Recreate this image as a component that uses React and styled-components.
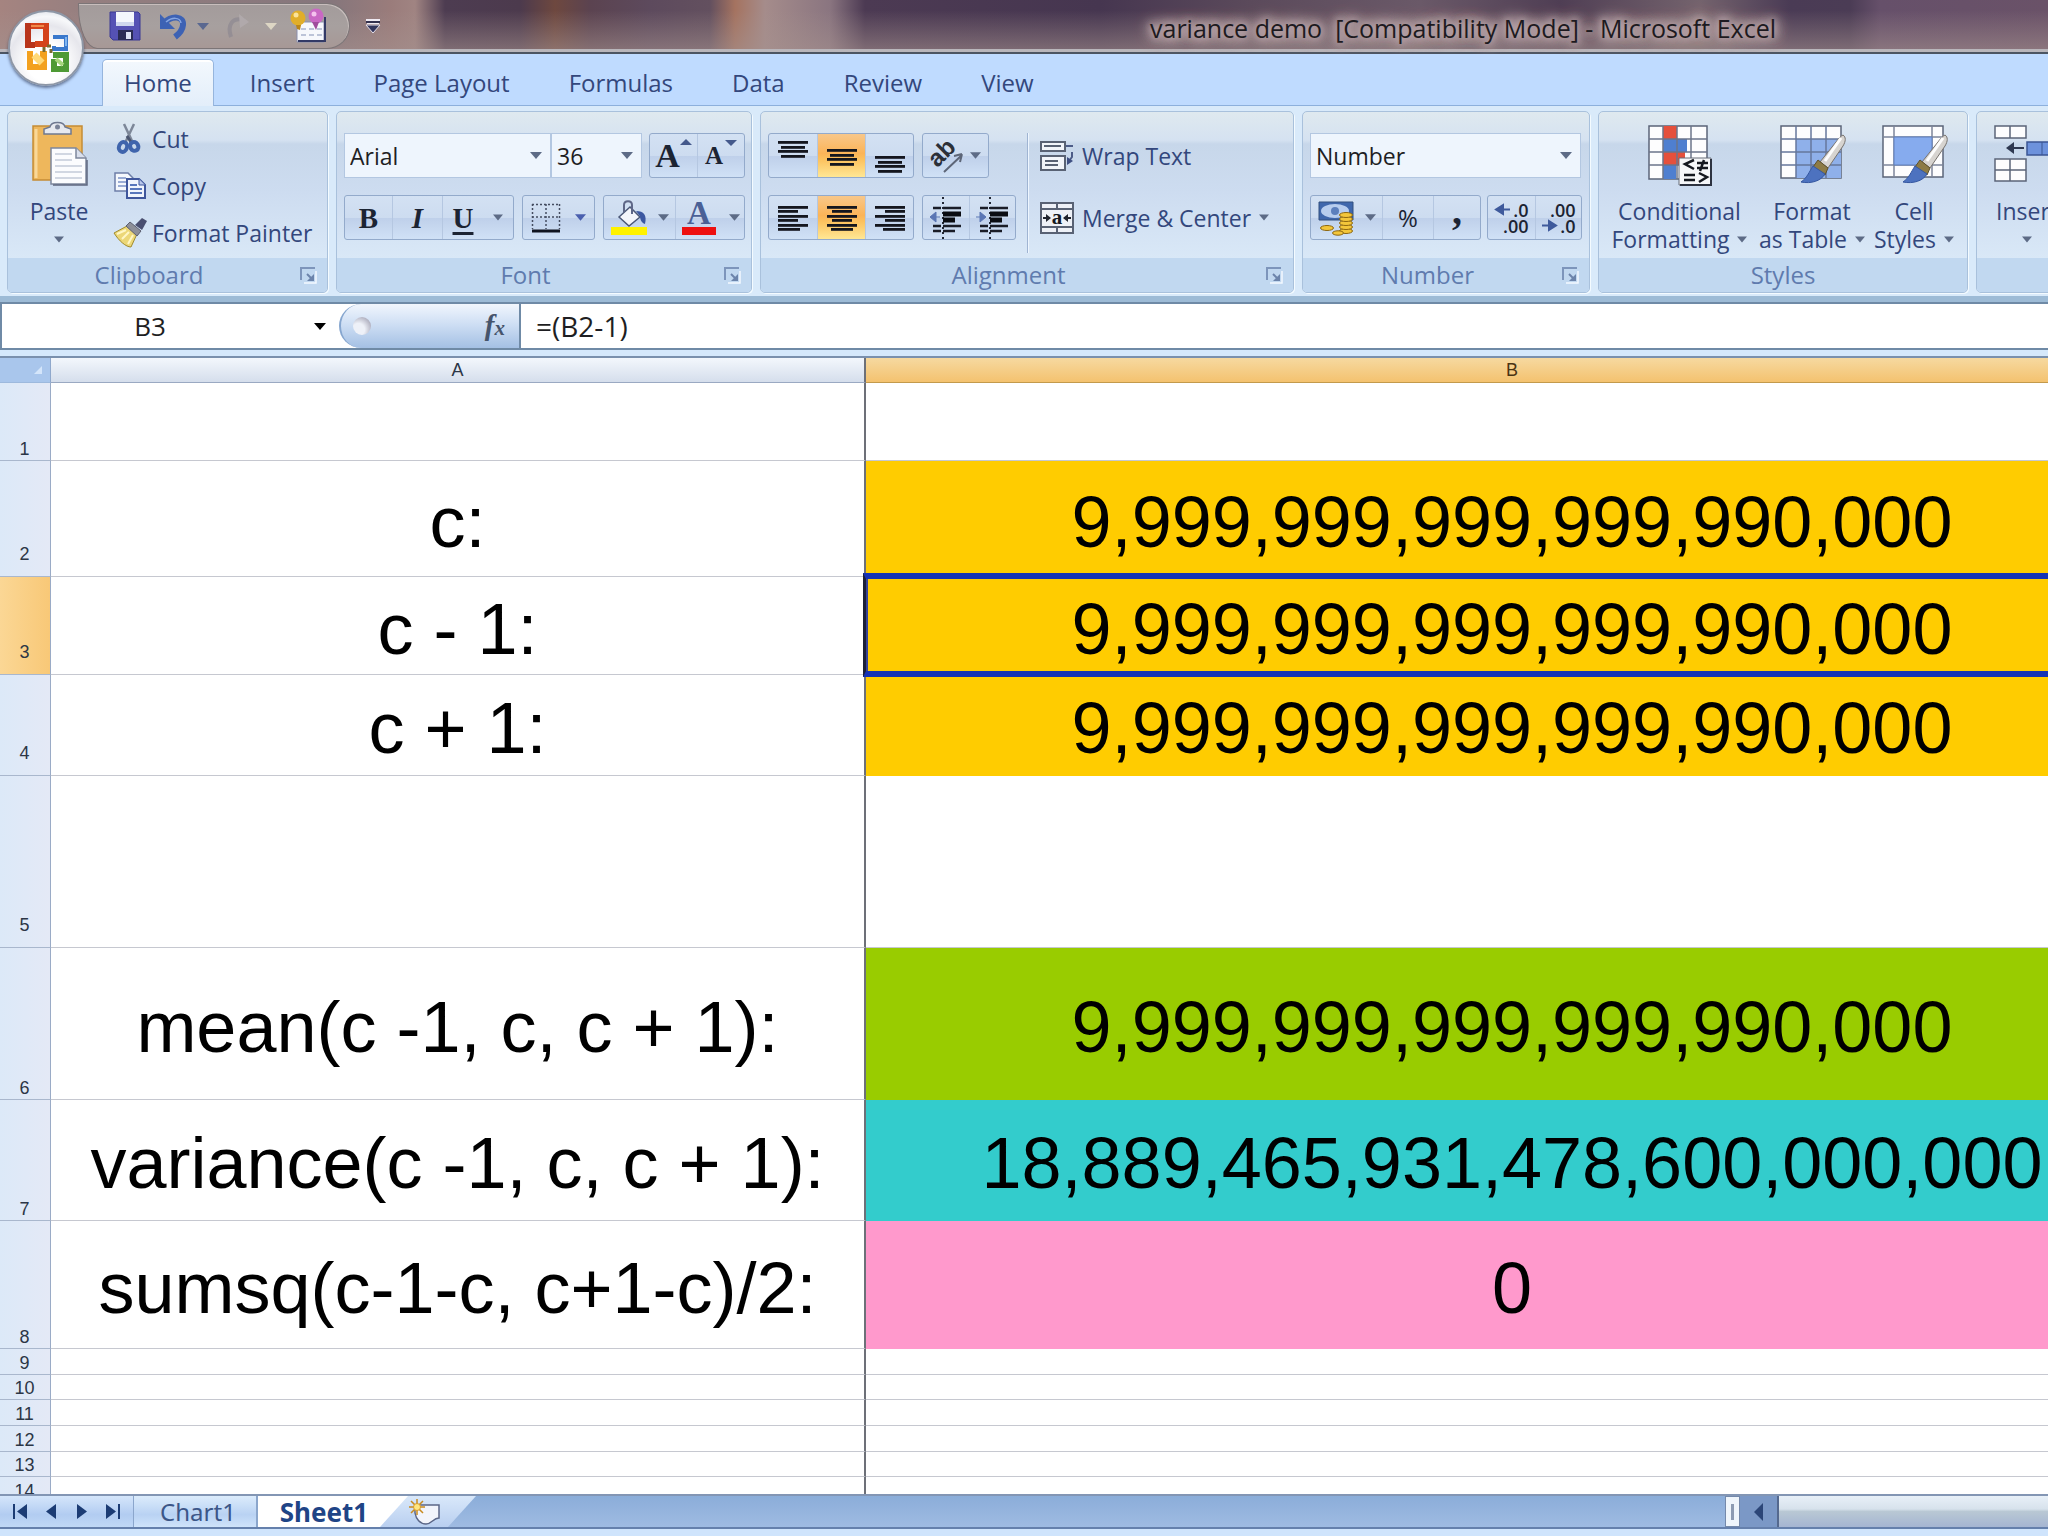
import React from "react";
import styled, { createGlobalStyle, css } from "styled-components";

const ui = `"Open Sans", "Noto Sans", sans-serif`;
const sheetFont = `"Liberation Sans", Arial, sans-serif`;
const ink = "#33477c";

const Global = createGlobalStyle`
  * { box-sizing: border-box; }
  html, body, #root { height: 100%; }
  body { margin: 0; overflow: hidden; background: #cfe4fb; font-family: ${ui}; }
  button, input, select { font: inherit; color: inherit; margin: 0; }
  button { padding: 0; border: 0; background: none; }
  svg { display: block; flex: none; overflow: visible; }
`;

/* ---------- window frame ---------- */

const Window = styled.div`
  position: relative;
  display: flex;
  flex-direction: column;
  height: 100vh;
  overflow: hidden;
`;

const TitleBar = styled.header`
  display: flex;
  align-items: center;
  flex: none;
  height: 54px;
  border-bottom: 2px solid #4c5562;
  box-shadow: inset 0 -3px 0 #b9b6bb;
  background:
    linear-gradient(180deg, rgba(170, 150, 145, 0) 20%, rgba(165, 145, 142, 0.6) 100%),
    linear-gradient(90deg, #a58480 0, #957f80 90px, #85767c 330px, #9a7c7b 390px, #a08482 415px,
      #4d3c51 445px, #4c3a4d 520px, #6e483f 555px, #5b4350 590px, #5d4a5d 650px, #63505f 710px,
      #a57360 735px, #a58c8b 765px, #8a7580 830px, #4c3a53 865px, #463650 1100px, #5b4a5b 1250px,
      #6a5968 1420px, #4f3e54 1560px, #74636d 1700px, #4a3b55 1790px, #4b3c55 1850px, #66506a 1880px, #6a5268 100%);
`;

const QuickAccess = styled.div`
  display: flex;
  align-items: center;
  flex: none;
  height: 46px;
  margin-left: 78px;
  padding: 0 8px 0 22px;
  border: 1px solid #7c7577;
  border-radius: 0 24px 24px 20px / 0 24px 24px 44px;
  background: linear-gradient(180deg, #a39b9b, #a7a09f 50%, #a79896);
  box-shadow: inset -1px 1px 0 #c7bdbc;
`;

const QuickButton = styled.button`
  display: flex;
  align-items: center;
  justify-content: center;
  flex: none;
  width: ${(p) => p.$w}px;
  height: 40px;
`;

const Title = styled.h1`
  flex: 1;
  margin: 0;
  padding: 4px 16px 0 754px;
  font-size: 25px;
  line-height: 32px;
  font-weight: 400;
  white-space: pre;
  color: #1d1a20;
  text-shadow: 0 0 6px #b9a5a9, 0 0 8px #b9a5a9, 0 0 12px #b9a5a9, 0 0 14px #b9a5a9,
    0 0 16px #b9a5a9, 0 0 18px #b9a5a9, 0 0 20px #b9a5a9;
`;

const OfficeButton = styled.button`
  position: absolute;
  left: 8px;
  top: 10px;
  z-index: 2;
  display: flex;
  align-items: center;
  justify-content: center;
  width: 76px;
  height: 76px;
  border-radius: 50%;
  border: 2px solid #8e97a6;
  background: radial-gradient(circle at 50% 70%, #ffffff 0 30%, #e6e6ec 60%, #f7f8fa 74%, #c2c9d4 100%);
  box-shadow: 0 2px 3px rgba(40, 50, 80, 0.6);
`;

/* ---------- ribbon ---------- */

const TabRow = styled.nav`
  display: flex;
  align-items: flex-end;
  flex: none;
  gap: 13px;
  height: 52px;
  padding-left: 102px;
  border-bottom: 1px solid #8db0dc;
  background: #bfdbff;
`;

const RibbonTab = styled.button`
  height: 47px;
  padding: 0 23px;
  margin-bottom: -1px;
  border-radius: 5px 5px 0 0;
  font-size: 24px;
  line-height: 44px;
  color: ${ink};
  ${(p) =>
    p.$active &&
    css`
      border: 1px solid #96b5dd;
      border-bottom: 0;
      padding: 0 21px;
      background: linear-gradient(180deg, #f3f8fd, #e3eefa);
      box-shadow: inset 0 2px 0 #ffffff;
    `}
`;

const Ribbon = styled.section`
  display: flex;
  gap: 8px;
  flex: none;
  height: 196px;
  padding: 5px 0 0 7px;
  overflow: hidden;
  border-bottom: 6px solid #9dbbd6;
  background: #d9eafa;
`;

const GroupBox = styled.section`
  display: flex;
  flex-direction: column;
  flex: none;
  width: ${(p) => p.$w}px;
  height: 182px;
  border: 1px solid #a9c1dc;
  border-radius: 5px;
  overflow: hidden;
  box-shadow: 1px 1px 0 #f4fbff;
  background: linear-gradient(180deg, #dfe9ef 0, #d5e2f1 28px, #c7d7ea 32px, #cddcf0 80px, #d9e8f7 146px);
`;

const GroupBody = styled.div`
  display: flex;
  flex: 1;
  padding: ${(p) => p.$pad || "0"};
  gap: ${(p) => p.$gap || 0}px;
`;

const GroupFooter = styled.footer`
  display: flex;
  align-items: center;
  flex: none;
  height: 34px;
  font-size: 24px;
  line-height: 32px;
  color: #5f7bae;
  background: #c1d8f0;

  h2 { flex: 1; margin: 0; font: inherit; text-align: center; }
`;

const Launcher = styled.button`
  display: flex;
  align-items: center;
  justify-content: center;
  width: 37px;
  height: 30px;
`;

const BigButton = styled.button`
  display: flex;
  flex-direction: column;
  align-items: center;
  flex: none;
  width: ${(p) => p.$w}px;
  padding-top: 10px;
  font-size: 23px;
  line-height: 28px;
  color: ${ink};

  > svg { margin-bottom: 11px; }
`;

const LabelLine = styled.span`
  display: flex;
  align-items: center;
  justify-content: center;
  gap: 8px;
  height: 28px;
  white-space: nowrap;
`;

const SmallButton = styled.button`
  display: flex;
  align-items: center;
  gap: ${(p) => p.$gap || 4}px;
  height: ${(p) => p.$h || 47}px;
  font-size: 23px;
  line-height: 30px;
  white-space: nowrap;
  color: ${ink};
`;

const Column = styled.div`
  display: flex;
  flex-direction: column;
  gap: ${(p) => p.$gap || 0}px;
  padding-top: ${(p) => p.$top || 0}px;
`;

const ToolRow = styled.div`
  display: flex;
  gap: ${(p) => p.$gap}px;
  height: 45px;
`;

const Segment = styled.div`
  display: flex;
  flex: none;
  border: 1px solid #93aacb;
  border-radius: 3px;
  background: linear-gradient(180deg, #d3e1f3 0, #cddcf0 50%, #bfd0ea 52%, #d0e1f6 100%);
`;

const SegmentButton = styled.button`
  display: flex;
  align-items: center;
  justify-content: center;
  gap: ${(p) => p.$gap || 0}px;
  width: ${(p) => p.$w}px;
  color: #1c2433;
  & + & { border-left: 1px solid ${(p) => (p.$plain ? "transparent" : "#b5c7e1")}; }
  ${(p) =>
    p.$active &&
    css`background: linear-gradient(180deg, #f8c78a 0, #fbb458 45%, #fcc25f 60%, #ffe794 100%);`}
`;

const Letter = styled.span`
  font-family: "Liberation Serif", serif;
  font-size: ${(p) => p.$size || 29}px;
  line-height: 40px;
  font-weight: 700;
  font-style: ${(p) => (p.$italic ? "italic" : "normal")};
  text-decoration: ${(p) => (p.$underline ? "underline" : "none")};
  text-underline-offset: 4px;
  text-decoration-thickness: 3px;
`;

const Sign = styled.span`
  font-size: 24px;
  line-height: 30px;
`;

const CommaSign = styled.span`
  padding-bottom: 14px;
  font-family: "Liberation Serif", serif;
  font-size: 40px;
  line-height: 30px;
  font-weight: 700;
`;

const Combo = styled.div`
  display: grid;
  align-items: center;
  width: ${(p) => p.$w}px;
  height: 45px;
  border: 1px solid #b3c7e1;
  background: #eef5fd;

  select {
    grid-area: 1 / 1;
    appearance: none;
    width: 100%;
    height: 43px;
    padding: 0 26px 0 5px;
    border: 0;
    border-radius: 0;
    background: transparent;
    font-size: 23px;
    color: #1e1e24;
  }
  svg {
    grid-area: 1 / 1;
    justify-self: end;
    margin-right: 8px;
    pointer-events: none;
  }
`;

const Divider = styled.i`
  flex: none;
  width: 2px;
  height: 120px;
  border-left: 1px solid #9fb4d2;
  border-right: 1px solid #eef6ff;
`;

/* ---------- formula bar ---------- */

const FormulaBar = styled.div`
  display: flex;
  flex: none;
  height: 48px;
  padding: 0 0 2px 2px;
  border-top: 2px solid #6f8aa6;
  background: #6f8aa6;
`;

const NameBox = styled.label`
  display: flex;
  align-items: center;
  flex: none;
  width: 337px;
  padding-right: 11px;
  background: #ffffff;

  input {
    width: 296px;
    height: 44px;
    margin-right: auto;
    padding: 0;
    border: 0;
    background: transparent;
    text-align: center;
    font-size: 26px;
    color: #1e1e22;
  }
`;

const FxHolder = styled.div`
  flex: none;
  width: 180px;
  background: #ffffff;
`;

const FxPill = styled.div`
  display: flex;
  align-items: center;
  justify-content: space-between;
  height: 100%;
  padding: 0 14px 0 12px;
  border-left: 2px solid #86a6cf;
  border-radius: 24px 0 0 24px;
  background: linear-gradient(180deg, #f1f6fd 0, #cfdff4 45%, #a4c0e4 100%);
`;

const FxKnob = styled.i`
  width: 18px;
  height: 18px;
  border-radius: 50%;
  background: radial-gradient(circle at 30% 70%, #eef1f8 0 35%, #b3b3c2 75%, #d0dbec 100%);
`;

const FxButton = styled.button`
  font-family: "Liberation Serif", serif;
  font-style: italic;
  font-weight: 700;
  font-size: 29px;
  line-height: 34px;
  color: #46546c;
  small { font-size: 21px; }
`;

const FormulaInput = styled.input`
  flex: 1;
  min-width: 0;
  padding: 0 15px;
  border: 0;
  border-left: 2px solid #6f8aa6;
  background: #ffffff;
  && { font-size: 28px; color: #1e1e22; }
`;

const Gutter = styled.div`
  flex: none;
  height: 6px;
  background: #d5e8fb;
`;

/* ---------- grid ---------- */

const GridArea = styled.main`
  flex: 1;
  min-height: 0;
  overflow: hidden;
  background: #ffffff;
  border-top: 2px solid #7a90ad;
`;

const Grid = styled.table`
  table-layout: fixed;
  width: 2159px;
  border-collapse: separate;
  border-spacing: 0;
  font-family: ${sheetFont};
  col:nth-child(1) { width: 51px; }
  col:nth-child(2) { width: 815px; }
  col:nth-child(3) { width: 1293px; }
`;

const ColHead = styled.th`
  height: 25px;
  padding: 0;
  font-size: 18px;
  line-height: 20px;
  font-weight: 400;
  color: ${(p) => (p.$active ? "#4a3413" : "#2c3646")};
  border-right: ${(p) => (p.$edge ? "2px solid #6d7078" : "1px solid #9aabc6")};
  border-bottom: 1px solid ${(p) => (p.$active ? "#c39a4c" : "#9aa9c2")};
  background: ${(p) =>
    p.$active ? "linear-gradient(180deg, #f6d9a0, #f4c26f)" : "linear-gradient(180deg, #f3f7fc, #d5deec)"};
`;

const Corner = styled.td`
  padding: 0;
  border-right: 1px solid #8fa8cc;
  border-bottom: 1px solid #9db9dd;
  background: #a9c6ec;
  svg { margin-left: auto; margin-right: 8px; }
`;

const RowHead = styled.th`
  height: ${(p) => p.$h}px;
  padding: 0 1px ${(p) => (p.$raised ? 12 : 1)}px 0;
  vertical-align: bottom;
  font-size: 18px;
  line-height: 20px;
  font-weight: 400;
  color: #2c3646;
  border-right: 1px solid #9aabc6;
  border-bottom: 1px solid #a9b7cd;
  background: ${(p) =>
    p.$active ? "linear-gradient(90deg, #fbd795, #f8c877)" : "linear-gradient(90deg, #dce9f8, #e4e9f6)"};
`;

const Cell = styled.td`
  padding: ${(p) => (p.$empty ? 0 : "6px 0 0")};
  text-align: center;
  white-space: nowrap;
  font-size: 72px;
  line-height: 76px;
  color: #000000;
  background: ${(p) => p.$fill || "#ffffff"};
  border-bottom: 1px solid ${(p) => p.$fill || "#c6c8d0"};
  border-right: ${(p) => (p.$edge ? "2px solid #6d7078" : "1px solid #cfd2da")};
  ${(p) =>
    p.$selected &&
    css`
      position: relative;
      z-index: 1;
      &::after {
        content: "";
        position: absolute;
        inset: -4px -3px -3px -3px;
        border: 6px solid #1633b4;
        border-left: 3px solid #1c2138;
        box-shadow: inset 2px 0 0 #3a4596;
        pointer-events: none;
      }
    `}
`;

/* ---------- sheet tab strip ---------- */

const Strip = styled.footer`
  display: flex;
  flex: none;
  height: 35px;
  border-top: 2px solid #8396b4;
  border-bottom: 2px solid #6580ac;
  background: linear-gradient(180deg, #8badd9, #9fbbe2);
`;

const NavGroup = styled.div`
  display: flex;
  align-items: center;
  width: 134px;
  padding-left: 4px;
  flex: none;
  border-right: 1px solid #8ba6cc;
  background: linear-gradient(180deg, #d5e6fb, #b2ccf1 60%, #c0d8f6);
`;

const NavButton = styled.button`
  display: flex;
  justify-content: center;
  width: 31px;
`;

const SheetTab = styled.button`
  flex: none;
  width: ${(p) => p.$w}px;
  font-family: "Noto Sans", "Open Sans", sans-serif;
  font-size: ${(p) => (p.$active ? 26 : 24)}px;
  line-height: 28px;
  font-weight: ${(p) => (p.$active ? 700 : 400)};
  color: ${(p) => (p.$active ? "#1f4486" : "#3c5688")};
  background: ${(p) => (p.$active ? "#ffffff" : "linear-gradient(180deg, #dcecfc, #b9d2f3 60%, #cfe3fa)")};
  border-right: ${(p) => (p.$active ? "0" : "2px solid #8ba6cc")};
  clip-path: ${(p) => (p.$active ? "polygon(0 0, 100% 0, calc(100% - 28px) 100%, 0 100%)" : "none")};
  padding-right: ${(p) => (p.$active ? 20 : 0)}px;
  padding-left: ${(p) => (p.$active ? 0 : 6)}px;
`;

const NewSheet = styled.button`
  display: flex;
  align-items: center;
  justify-content: center;
  width: 96px;
  margin-left: -30px;
  padding-right: 6px;
  background: linear-gradient(180deg, #d9e8fa, #b9cff0);
  clip-path: polygon(28px 0, 100% 0, calc(100% - 28px) 100%, 0 100%);
`;

const Splitter = styled.button`
  display: flex;
  align-items: center;
  justify-content: center;
  width: 15px;
  margin-left: auto;
  border: 1px solid #7489ab;
  background: #eff5fb;
`;

const ScrollArrow = styled.button`
  display: flex;
  align-items: center;
  justify-content: center;
  width: 37px;
  background: #7b98c6;
`;

const ScrollThumb = styled.button`
  width: 271px;
  border-left: 2px solid #55698e;
  background: linear-gradient(180deg, #e8f0f8 0, #d7e2ec 42%, #b9c8d4 50%, #a5b5d2 100%);
`;

const StatusEdge = styled.div`
  flex: none;
  height: 7px;
  background: #cfe4fc;
`;

/* ---------- drawings ---------- */

const Caret = ({ color = "#5d6b86", w = 12 }) => (
  <svg width={w} height="7" viewBox="0 0 12 7" aria-hidden="true">
    <path d="M0 0h12L6 7z" fill={color} />
  </svg>
);

const OfficeLogo = () => (
  <svg width="52" height="54" viewBox="0 0 52 54" fill="none">
    <path d="M8 5h18v18H15" stroke="#d4431c" strokeWidth="6" />
    <path d="M8 2v22h7" stroke="#b8351c" strokeWidth="6" />
    <path d="M11 5h13" stroke="#f08a4a" strokeWidth="2" />
    <path d="M33 16h13v12H34v-3" stroke="#3a78cc" strokeWidth="4" />
    <path d="M46 16v9" stroke="#7fb4f0" strokeWidth="2" />
    <path d="M10 30v16h14V33h-4" stroke="#f3a11f" strokeWidth="6" />
    <path d="M14 34l8 8" stroke="#ffd978" strokeWidth="7" />
    <path d="M33 34h13v14H34V38" stroke="#4e9a35" strokeWidth="6" />
    <path d="M36 38l7 6" stroke="#a6d67c" strokeWidth="4" />
    <path d="M27 25h4M24 26v5M31 28v4" stroke="#7a6a30" strokeWidth="3" />
  </svg>
);

const SaveIcon = () => (
  <svg width="32" height="32" viewBox="0 0 32 32">
    <path d="M1 2h28l2 2v26H4l-3-3z" fill="#5552b4" stroke="#3a3894" />
    <path d="M7 2h18v14H7z" fill="#f4f7fd" />
    <path d="M7 12h18v4H7z" fill="#cfd7ee" />
    <path d="M9 20h15v10H9z" fill="#2a2c55" />
    <path d="M17 22h5v7h-5z" fill="#dde3f4" />
  </svg>
);

const UndoIcon = () => (
  <svg width="30" height="28" viewBox="0 0 30 28" fill="none">
    <path d="M6 11C14 3 26 4 25 13c-.5 6-4 9-8 12" stroke="#3d62b4" strokeWidth="6" />
    <path d="M2 2v15h15z" fill="#3d62b4" />
    <path d="M8 10c6-5 14-5 15 1" stroke="#86a6e2" strokeWidth="1.5" />
  </svg>
);

const RedoIcon = () => (
  <svg width="24" height="26" viewBox="0 0 24 26" fill="none" opacity=".75">
    <path d="M5 24C1 12 6 4 18 7" stroke="#8f8a92" strokeWidth="4" />
    <path d="M13 1l10 8-9 6z" fill="#b4adb0" />
  </svg>
);

const ChartSheetIcon = () => (
  <svg width="38" height="34" viewBox="0 0 38 34">
    <path d="M8 13h27v20H8z" fill="#f6f8fc" stroke="#8a8fae" strokeWidth="1" />
    <path d="M9 32h27V8" stroke="#333a66" strokeWidth="2" fill="none" />
    <path d="M12 20h21M12 26h21" stroke="#a9b2cc" strokeWidth="1.5" strokeDasharray="5 3" />
    <circle cx="9" cy="9" r="7.5" fill="#e0ae2a" />
    <circle cx="7" cy="6" r="2.5" fill="#fae39a" />
    <path d="M7 16h5l-1 5-3-1z" fill="#b98518" />
    <circle cx="27" cy="7" r="7.5" fill="#c968c4" />
    <circle cx="25" cy="5" r="2.5" fill="#f4c2ee" />
    <path d="M23 13h7l-3 8z" fill="#a04c9c" />
  </svg>
);

const CustomizeIcon = () => (
  <svg width="16" height="15" viewBox="0 0 16 15">
    <path d="M1 1h14M2 4h12" stroke="#efeaf2" strokeWidth="2" />
    <path d="M1 3h14" stroke="#33304e" strokeWidth="2" />
    <path d="M1 6h14l-7 8z" fill="#33355c" stroke="#e4dfea" />
  </svg>
);

const PasteIcon = () => (
  <svg width="58" height="64" viewBox="0 0 58 64">
    <path d="M3 4h49v54H3z" fill="#eeb75c" stroke="#c58c35" strokeWidth="1.5" />
    <path d="M6 7v49" stroke="#f9d898" strokeWidth="3" />
    <path d="M14 12V7l6-2c1-6 14-6 15 0l6 2v5z" fill="#e6e9ef" stroke="#6f7990" strokeWidth="1.5" />
    <circle cx="27.500" cy="5" r="2.500" fill="#7a8398" />
    <path d="M21 26h25l10 10v26H21z" fill="#fbfcfe" stroke="#7d879c" strokeWidth="1.500" />
    <path d="M46 26v10h10" fill="#d9dfec" stroke="#7d879c" strokeWidth="1.500" />
    <path d="M25 32h17M25 38h17M25 44h27M25 50h27M25 56h27" stroke="#c3cad9" strokeWidth="1.500" />
    <path d="M57 38v25H23" fill="none" stroke="#5f6880" strokeWidth="1.500" />
  </svg>
);

const CutIcon = () => (
  <svg width="34" height="32" viewBox="0 0 34 32" fill="none">
    <path d="M10 1l9 19M20 1l-9 19" stroke="#7d8798" strokeWidth="2.500" />
    <path d="M13 13l4 6" stroke="#4a5570" strokeWidth="3" />
    <ellipse cx="9" cy="24" rx="4" ry="5" stroke="#3f64ac" strokeWidth="4" transform="rotate(20 9 24)" />
    <ellipse cx="20" cy="23.500" rx="4" ry="4.500" stroke="#3f64ac" strokeWidth="4" transform="rotate(-30 20 23)" />
  </svg>
);

const CopyIcon = () => (
  <svg width="34" height="30" viewBox="0 0 34 30">
    <path d="M1 2h13l5 5v13H1z" fill="#f5f8fd" stroke="#6d7ea8" strokeWidth="1.5" />
    <path d="M4 7h8M4 11h11M4 15h11" stroke="#7c93c8" strokeWidth="1.5" />
    <path d="M13 8h12l6 6v13H13z" fill="#f0f4fd" stroke="#3f569c" strokeWidth="2" />
    <path d="M25 8v6h6" fill="#b9c7ea" stroke="#3f569c" />
    <path d="M16 14h7M16 18h12M16 22h12" stroke="#5876bc" strokeWidth="2" />
  </svg>
);

const PainterIcon = () => (
  <svg width="34" height="32" viewBox="0 0 34 32">
    <path d="M0 16l13-7 10 8-6 13C12 30 5 24 0 16z" fill="#ecd777" stroke="#a18b2c" />
    <path d="M3 17l9-4M8 22l7-7M14 27l5-9" stroke="#fff6c4" strokeWidth="2" />
    <path d="M12 9l4-4 11 9-4 5z" fill="#8d8f98" stroke="#5b5e70" />
    <path d="M21 8l7-7 5 3-5 9z" fill="#4a4f70" />
  </svg>
);

const LauncherIcon = () => (
  <svg width="17" height="17" viewBox="0 0 17 17" fill="none">
    <path d="M1 13V1h14" stroke="#7d95bb" strokeWidth="2" />
    <path d="M4 16h12V4" stroke="#f3f9ff" strokeWidth="1.5" />
    <path d="M7 7l5 5" stroke="#6c84ab" strokeWidth="2" />
    <path d="M14 7v7H7z" fill="#6c84ab" />
  </svg>
);

const BordersIcon = () => (
  <svg width="30" height="30" viewBox="0 0 30 30" fill="none">
    <path d="M1 1.500h28M1 14h28M1.500 1v25M15 1v25M28.500 1v25" stroke="#444c60" strokeWidth="1.500" strokeDasharray="2 2" />
    <path d="M1 28h28" stroke="#101420" strokeWidth="3" />
  </svg>
);

const BucketIcon = () => (
  <svg width="38" height="36" viewBox="0 0 38 36">
    <path d="M9 17L20 7l10 10-11 9z" fill="#f4f5fa" stroke="#4c5878" strokeWidth="1.500" />
    <path d="M14 12V5c0-5 8-5 8 0v9" fill="none" stroke="#5e6787" strokeWidth="2" />
    <path d="M26 11c8 0 11 4 9 13-3-1-5-4-5-8z" fill="#3b57a0" />
    <path d="M1 27h36v8H1z" fill="#fff200" />
  </svg>
);

const FontColorIcon = () => (
  <svg width="36" height="36" viewBox="0 0 36 36">
    <path d="M1 27h34v8H1z" fill="#ee1010" />
    <text x="18" y="24" textAnchor="middle" fontFamily="Liberation Serif, serif" fontWeight="700" fontSize="33" fill="#4a6096">A</text>
  </svg>
);

const GrowArrow = ({ down }) => (
  <svg width="12" height="34" viewBox="0 0 12 34">
    <path d={down ? "M0 1h12L6 7z" : "M0 6h12L6 0z"} fill="#44598c" />
  </svg>
);

const Bars = ({ rows }) => (
  <svg width="30" height="32" viewBox="0 0 30 32">
    {rows.map(([x, y, w]) => (
      <rect key={y} x={x} y={y} width={w} height="2.8" fill="#14161e" />
    ))}
  </svg>
);

const vAlign = (top) => [[0, top, 30], [3, top + 5, 24], [0, top + 9, 30], [3, top + 14, 24]];
const hAlign = (kind) =>
  [30, 20, 30, 20, 30, 22].map((w, i) => [
    kind === "left" ? 0 : kind === "right" ? 30 - w : (30 - w) / 2,
    4 + Math.round(i * 4.4),
    w,
  ]);

const OrientationIcon = () => (
  <svg width="34" height="32" viewBox="0 0 34 32">
    <text x="13" y="20" transform="rotate(-45 13 14)" textAnchor="middle" fontFamily="Liberation Sans, sans-serif" fontWeight="700" fontSize="24" fill="#2c3038">ab</text>
    <path d="M14 32L32 15M32 14l-8 2M32 14l-2 8" stroke="#5d6678" strokeWidth="2" fill="none" />
  </svg>
);

const IndentIcon = ({ inward }) => (
  <svg width="34" height="42" viewBox="0 0 34 42" fill="none">
    <path d="M14 0v42" stroke="#222836" strokeWidth="2" strokeDasharray="2 3" />
    <path d="M4 11h8M4 29h8M4 34h8M14 11h18M14 29h18M14 34h12" stroke="#1a1d28" strokeWidth="2.500" />
    <path d="M14 17h18M14 23h12" stroke="#0a0c12" strokeWidth="5" />
    <path d={inward ? "M0 20h6M4 15l6 5-6 5z" : "M11 20H5M7 15l-6 5 6 5z"} fill="#5b76b4" stroke="#5b76b4" />
  </svg>
);

const WrapIcon = () => (
  <svg width="34" height="32" viewBox="0 0 34 32" fill="none">
    <path d="M1 2h24v9H1zM1 16h24v14H1z" fill="#f2f5fa" stroke="#596274" strokeWidth="2" />
    <path d="M4 6h17M5 21h13M5 25h13" stroke="#596274" strokeWidth="2" />
    <path d="M26 6h7M32 12v5l-3 4" stroke="#4d5c88" strokeWidth="2" />
    <path d="M27 17l6 4-6 4z" fill="#3e4f82" />
  </svg>
);

const MergeIcon = () => (
  <svg width="34" height="32" viewBox="0 0 34 32">
    <path d="M1 1h32v30H1z" fill="#eef1f7" stroke="#596274" strokeWidth="2" />
    <path d="M1 7h32M1 25h32M17 1v6M17 25v6" stroke="#596274" strokeWidth="2" />
    <path d="M3 16h7M31 16h-7" stroke="#20242e" strokeWidth="2" />
    <path d="M6 12v8l5-4zM28 12v8l-5-4z" fill="#20242e" />
    <text x="17" y="22" textAnchor="middle" fontFamily="Liberation Serif, serif" fontWeight="700" fontSize="21" fill="#15181f">a</text>
  </svg>
);

const CurrencyIcon = () => (
  <svg width="36" height="36" viewBox="0 0 36 36">
    <path d="M1 2h34v18H1z" fill="#3f67ac" stroke="#33507f" />
    <ellipse cx="17" cy="11" rx="14" ry="7" fill="#b7cdee" />
    <circle cx="17" cy="11" r="4" fill="#5b7fbd" />
    <g fill="#f3c63b" stroke="#8d6710">
      <ellipse cx="28" cy="31" rx="6.500" ry="2.500" />
      <ellipse cx="28" cy="27" rx="6.500" ry="2.500" />
      <ellipse cx="28" cy="23" rx="6.500" ry="2.500" />
      <ellipse cx="28" cy="19" rx="6.500" ry="2.500" />
      <ellipse cx="28" cy="15" rx="6.500" ry="2.500" />
      <ellipse cx="9" cy="28" rx="6.500" ry="2.500" />
      <ellipse cx="20" cy="33" rx="5.500" ry="2.200" />
    </g>
  </svg>
);

const DecimalGrid = styled.span`
  display: grid;
  grid-template-columns: 1fr auto;
  align-items: center;
  width: 34px;
  font-size: 18px;
  line-height: 16px;
  font-weight: 600;
  text-align: right;
  b { font-weight: 600; grid-column: 1 / 3; }
`;

const DecimalArrow = ({ right }) => (
  <svg width="15" height="11" viewBox="0 0 15 11">
    <path d={right ? "M0 5.500h8M7 1l7 4.500-7 4.500z" : "M15 5.500H7M8 1L1 5.500 8 10z"} fill="#3f5a9c" stroke="#3f5a9c" strokeWidth="2" />
  </svg>
);

const Brush = ({ x }) => (
  <g transform={`translate(${x} 12)`}>
    <path d="M42 1c3 2 3 6 0 11L27 34l-8-6L35 8c2-3 5-6 7-7z" fill="#d7d4d0" stroke="#77726d" />
    <path d="M40 4L24 27" stroke="#fdfdfd" strokeWidth="3" />
    <path d="M17 26l10 8-3 7-12-8z" fill="#8d7b45" stroke="#5d502b" />
    <path d="M12 32c-4 6-6 12-12 16 10 2 20-1 24-8z" fill="#4d72bf" stroke="#3557a0" />
  </g>
);

const ConditionalIcon = () => (
  <svg width="66" height="64" viewBox="0 0 66 64">
    <path d="M2 4h58v53H2z" fill="#fdfdfe" stroke="#5b6478" strokeWidth="1.500" />
    <path d="M16 4h14v13H16zM16 30h22v13H16z" fill="#e5503c" />
    <path d="M16 17h24v13H16zM16 43h13v14H16z" fill="#4f7fd0" />
    <path d="M2 17h58M2 30h58M2 43h58M16 4v53M30 4v53M44 4v53" stroke="#6b748a" strokeWidth="1.500" />
    <path d="M32 36h32v27H32z" fill="#f6f7f9" stroke="#666c78" />
    <path d="M64 37v26H33" stroke="#2e3340" strokeWidth="2" fill="none" />
    <g stroke="#15181f" strokeWidth="2.500" fill="none">
      <path d="M47 38l-9 4 9 5M37 53h11M37 58h11M50 41h11M50 46h11M57 38l-4 11M52 51l8 4-8 5" />
    </g>
  </svg>
);

const TableIcon = () => (
  <svg width="66" height="64" viewBox="0 0 66 64">
    <path d="M2 4h60v52H2z" fill="#fdfdfe" stroke="#5b6478" strokeWidth="1.500" />
    <path d="M17 17h45v39H17z" fill="#8fb0ea" />
    <path d="M2 17h60M2 30h60M2 43h60M17 4v52M32 4v52M47 4v52" stroke="#66779c" strokeWidth="1.500" />
    <Brush x={22} />
  </svg>
);

const CellStyleIcon = () => (
  <svg width="66" height="64" viewBox="0 0 66 64">
    <path d="M2 4h60v51H2z" fill="#fdfdfe" stroke="#5b6478" strokeWidth="1.500" />
    <path d="M2 15h60M2 43h60M13 4v51M51 4v51" stroke="#7c859a" strokeWidth="1.500" />
    <path d="M13 15h38v28H13z" fill="#86abee" stroke="#5f7fbd" />
    <Brush x={22} />
  </svg>
);

const InsertCellsIcon = () => (
  <svg width="66" height="64" viewBox="0 0 66 64">
    <path d="M1 4h31v12H1zM1 37h31v22H1z" fill="#fdfdfe" stroke="#5b6478" strokeWidth="1.500" />
    <path d="M16 4v12M16 37v22M1 48h31" stroke="#5b6478" strokeWidth="1.500" />
    <path d="M33 20h32v13H33z" fill="#6d92dc" stroke="#3b5694" strokeWidth="1.500" />
    <path d="M48 20v13" stroke="#3b5694" />
    <path d="M30 26H18" stroke="#2e3850" strokeWidth="2" />
    <path d="M20 20l-8 6 8 6z" fill="#2e3850" />
  </svg>
);

const NewSheetIcon = () => (
  <svg width="32" height="26" viewBox="0 0 32 26">
    <path d="M6 6h24v13c-6 0-7 6-13 6S7 20 6 14z" fill="#f2f4fb" stroke="#5b6687" strokeWidth="1.500" />
    <path d="M8 0v16M0 8h16M2 2l12 12M14 2L2 14" stroke="#c98a1e" strokeWidth="1.500" />
    <circle cx="8" cy="8" r="3.500" fill="#ffe680" stroke="#d69a2a" />
  </svg>
);

const NavIcon = ({ flip, end }) => (
  <svg width="16" height="15" viewBox="0 0 16 15">
    <g transform={flip ? "translate(16 0) scale(-1 1)" : undefined} fill="#1c3c74">
      <path d={end ? "M15 0v15L5 7.500z" : "M13 0v15L3 7.500z"} />
      {end && <path d="M1 0h2v15H1z" />}
    </g>
  </svg>
);

/* ---------- parts ---------- */

const Group = ({ title, w, launcher = true, children, pad, gap }) => (
  <GroupBox $w={w} aria-label={title}>
    <GroupBody $pad={pad} $gap={gap}>{children}</GroupBody>
    <GroupFooter>
      {title && <h2>{title}</h2>}
      {launcher && (
        <Launcher aria-label={`${title} settings`}>
          <LauncherIcon />
        </Launcher>
      )}
    </GroupFooter>
  </GroupBox>
);

const Choice = ({ label, w, value }) => (
  <Combo $w={w}>
    <select aria-label={label} defaultValue={value}>
      <option>{value}</option>
    </select>
    <Caret />
  </Combo>
);

const tabs = ["Home", "Insert", "Page Layout", "Formulas", "Data", "Review", "View"];

const gold = "#ffcc00";
const big = "9,999,999,999,999,990,000";
const rows = [
  { h: 78 },
  { h: 116, a: "c:", b: big, fill: gold, raised: true },
  { h: 98, a: "c - 1:", b: big, fill: gold, selected: true, raised: true },
  { h: 101, a: "c + 1:", b: big, fill: gold, raised: true },
  { h: 172, raised: true },
  { h: 152, a: "mean(c -1, c, c + 1):", b: big, fill: "#99cc00" },
  { h: 121, a: "variance(c -1, c, c + 1):", b: "18,889,465,931,478,600,000,000", fill: "#33cccc" },
  { h: 128, a: "sumsq(c-1-c, c+1-c)/2:", b: "0", fill: "#ff99cc" },
  { h: 26 },
  { h: 25 },
  { h: 26 },
  { h: 26 },
  { h: 25 },
  { h: 26 },
];

export default function App() {
  return (
    <Window>
      <Global />
      <TitleBar>
        <QuickAccess>
          <QuickButton $w={48} aria-label="Save"><SaveIcon /></QuickButton>
          <QuickButton $w={48} aria-label="Undo"><UndoIcon /></QuickButton>
          <QuickButton $w={12} aria-label="Undo list"><Caret color="#5a6890" /></QuickButton>
          <QuickButton $w={58} aria-label="Redo"><RedoIcon /></QuickButton>
          <QuickButton $w={8} aria-label="Redo list"><Caret color="#ddd6c4" /></QuickButton>
          <QuickButton $w={66} aria-label="Chart sheet"><ChartSheetIcon /></QuickButton>
        </QuickAccess>
        <QuickButton $w={46} aria-label="Customize toolbar"><CustomizeIcon /></QuickButton>
        <Title>variance demo  [Compatibility Mode] - Microsoft Excel</Title>
      </TitleBar>
      <OfficeButton aria-label="Office menu"><OfficeLogo /></OfficeButton>

      <TabRow>
        {tabs.map((t) => (
          <RibbonTab key={t} $active={t === "Home"}>{t}</RibbonTab>
        ))}
      </TabRow>

      <Ribbon>
        <Group title="Clipboard" w={321} pad="0 0 0 8px" gap={12}>
          <BigButton $w={86}>
            <PasteIcon />
            <LabelLine>Paste</LabelLine>
            <LabelLine><Caret w={10} /></LabelLine>
          </BigButton>
          <Column $top={3}>
            <SmallButton><CutIcon />Cut</SmallButton>
            <SmallButton><CopyIcon />Copy</SmallButton>
            <SmallButton><PainterIcon />Format Painter</SmallButton>
          </Column>
        </Group>

        <Group title="Font" w={416} pad="21px 0 0 7px">
          <Column $gap={17}>
            <ToolRow $gap={7}>
              <ToolRow $gap={0}>
                <Choice label="Font name" w={207} value="Arial" />
                <Choice label="Font size" w={91} value="36" />
              </ToolRow>
              <Segment>
                <SegmentButton $w={47} aria-label="Grow font"><Letter $size={34}>A</Letter><GrowArrow /></SegmentButton>
                <SegmentButton $w={47} aria-label="Shrink font" $gap={2}><Letter $size={25}>A</Letter><GrowArrow down /></SegmentButton>
              </Segment>
            </ToolRow>
            <ToolRow $gap={8}>
              <Segment>
                <SegmentButton $w={47} aria-label="Bold"><Letter>B</Letter></SegmentButton>
                <SegmentButton $w={50} aria-label="Italic"><Letter $italic>I</Letter></SegmentButton>
                <SegmentButton $w={71} $gap={20} aria-label="Underline"><Letter $underline>U</Letter><Caret w={10} /></SegmentButton>
              </Segment>
              <Segment>
                <SegmentButton $w={71} $gap={14} aria-label="Borders"><BordersIcon /><Caret color="#4a5fae" w={11} /></SegmentButton>
              </Segment>
              <Segment>
                <SegmentButton $w={71} $gap={10} aria-label="Fill colour"><BucketIcon /><Caret w={11} /></SegmentButton>
                <SegmentButton $w={69} $gap={12} aria-label="Font colour"><FontColorIcon /><Caret w={11} /></SegmentButton>
              </Segment>
            </ToolRow>
          </Column>
        </Group>

        <Group title="Alignment" w={534} pad="21px 0 0 7px" gap={11}>
          <Column $gap={17}>
            <ToolRow $gap={8}>
              <Segment>
                <SegmentButton $w={48} aria-label="Top align"><Bars rows={vAlign(1)} /></SegmentButton>
                <SegmentButton $w={48} $active aria-label="Middle align"><Bars rows={vAlign(9)} /></SegmentButton>
                <SegmentButton $w={48} aria-label="Bottom align"><Bars rows={vAlign(16)} /></SegmentButton>
              </Segment>
              <Segment>
                <SegmentButton $w={65} $gap={6} aria-label="Orientation"><OrientationIcon /><Caret w={11} /></SegmentButton>
              </Segment>
            </ToolRow>
            <ToolRow $gap={8}>
              <Segment>
                <SegmentButton $w={48} aria-label="Align left"><Bars rows={hAlign("left")} /></SegmentButton>
                <SegmentButton $w={48} $active aria-label="Center"><Bars rows={hAlign("center")} /></SegmentButton>
                <SegmentButton $w={48} aria-label="Align right"><Bars rows={hAlign("right")} /></SegmentButton>
              </Segment>
              <Segment>
                <SegmentButton $w={46} $plain aria-label="Decrease indent"><IndentIcon /></SegmentButton>
                <SegmentButton $w={46} $plain aria-label="Increase indent"><IndentIcon inward /></SegmentButton>
              </Segment>
            </ToolRow>
          </Column>
          <Divider />
          <Column $gap={17}>
            <SmallButton $h={45} $gap={8}><WrapIcon />Wrap Text</SmallButton>
            <SmallButton $h={45} $gap={8}><MergeIcon />Merge &amp; Center <Caret w={10} /></SmallButton>
          </Column>
        </Group>

        <Group title="Number" w={288} pad="21px 0 0 7px">
          <Column $gap={17}>
            <Choice label="Number format" w={271} value="Number" />
            <ToolRow $gap={6}>
              <Segment>
                <SegmentButton $w={71} $gap={11} aria-label="Accounting format"><CurrencyIcon /><Caret w={11} /></SegmentButton>
                <SegmentButton $w={51} aria-label="Percent style"><Sign>%</Sign></SegmentButton>
                <SegmentButton $w={47} aria-label="Comma style"><CommaSign>,</CommaSign></SegmentButton>
              </Segment>
              <Segment>
                <SegmentButton $w={47} aria-label="Increase decimal">
                  <DecimalGrid><DecimalArrow /><span>.0</span><b>.00</b></DecimalGrid>
                </SegmentButton>
                <SegmentButton $w={46} aria-label="Decrease decimal">
                  <DecimalGrid><b>.00</b><DecimalArrow right /><span>.0</span></DecimalGrid>
                </SegmentButton>
              </Segment>
            </ToolRow>
          </Column>
        </Group>

        <Group title="Styles" w={370} launcher={false} pad="0 0 0 4px">
          <BigButton $w={153}>
            <ConditionalIcon />
            <LabelLine>Conditional</LabelLine>
            <LabelLine>Formatting <Caret w={10} /></LabelLine>
          </BigButton>
          <BigButton $w={112}>
            <TableIcon />
            <LabelLine>Format</LabelLine>
            <LabelLine>as Table <Caret w={10} /></LabelLine>
          </BigButton>
          <BigButton $w={92}>
            <CellStyleIcon />
            <LabelLine>Cell</LabelLine>
            <LabelLine>Styles <Caret w={10} /></LabelLine>
          </BigButton>
        </Group>

        <Group title="" w={320} launcher={false} pad="0 0 0 2px">
          <BigButton $w={96}>
            <InsertCellsIcon />
            <LabelLine>Insert</LabelLine>
            <LabelLine><Caret w={10} /></LabelLine>
          </BigButton>
        </Group>
      </Ribbon>

      <FormulaBar>
        <NameBox>
          <input aria-label="Name box" defaultValue="B3" />
          <Caret color="#000000" w={16} />
        </NameBox>
        <FxHolder>
          <FxPill>
            <FxKnob />
            <FxButton aria-label="Insert function">f<small>x</small></FxButton>
          </FxPill>
        </FxHolder>
        <FormulaInput aria-label="Formula" defaultValue="=(B2-1)" />
      </FormulaBar>
      <Gutter />

      <GridArea>
        <Grid>
          <colgroup><col /><col /><col /></colgroup>
          <thead>
            <tr>
              <Corner>
                <svg width="8" height="8" viewBox="0 0 8 8"><path d="M8 0v8H0z" fill="#d4e5fa" /></svg>
              </Corner>
              <ColHead $edge>A</ColHead>
              <ColHead $active>B</ColHead>
            </tr>
          </thead>
          <tbody>
            {rows.map((r, i) => (
              <tr key={i}>
                <RowHead $h={r.h} $active={r.selected} $raised={r.raised}>{i + 1}</RowHead>
                <Cell $edge $empty={!r.a}>{r.a}</Cell>
                <Cell $fill={r.fill} $selected={r.selected} $empty={!r.b}>{r.b}</Cell>
              </tr>
            ))}
          </tbody>
        </Grid>
      </GridArea>

      <Strip>
        <NavGroup>
          <NavButton aria-label="First sheet"><NavIcon end /></NavButton>
          <NavButton aria-label="Previous sheet"><NavIcon /></NavButton>
          <NavButton aria-label="Next sheet"><NavIcon flip /></NavButton>
          <NavButton aria-label="Last sheet"><NavIcon flip end /></NavButton>
        </NavGroup>
        <SheetTab $w={124}>Chart1</SheetTab>
        <SheetTab $w={152} $active>Sheet1</SheetTab>
        <NewSheet aria-label="New sheet"><NewSheetIcon /></NewSheet>
        <Splitter aria-label="Resize scroll bar">
          <svg width="3" height="16" viewBox="0 0 3 16"><path d="M0 0h3v16H0z" fill="#8d9bb2" /></svg>
        </Splitter>
        <ScrollArrow aria-label="Scroll left">
          <svg width="10" height="18" viewBox="0 0 10 18"><path d="M9 0v18L0 9z" fill="#2c4678" /></svg>
        </ScrollArrow>
        <ScrollThumb aria-label="Scroll thumb" />
      </Strip>
      <StatusEdge />
    </Window>
  );
}
